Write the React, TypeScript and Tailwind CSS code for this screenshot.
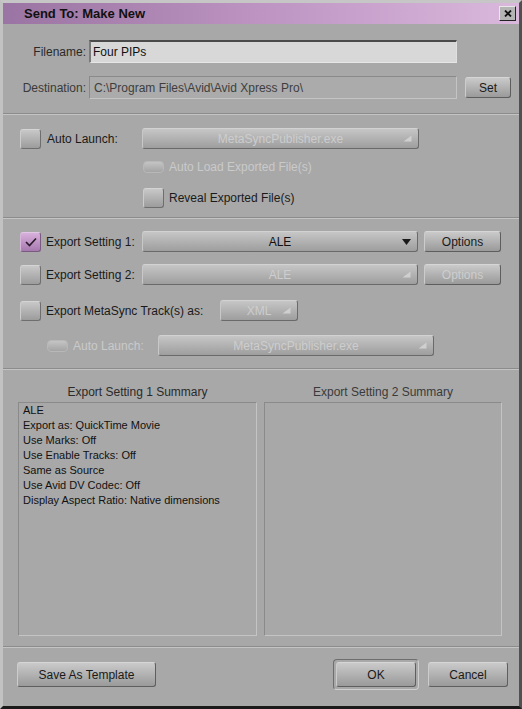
import React from 'react';

const font = { fontFamily: '"Liberation Sans", Arial, sans-serif' };

const Check: React.FC<{ checked?: boolean; disabled?: boolean }> = ({ checked, disabled }) => {
    if (disabled) {
        return (
            <div className="w-[21px] h-[12px] rounded-[4px] border border-[#b8b8b8] bg-gradient-to-b from-[#c4c4c4] to-[#a4a4a4] shrink-0" />
        );
    }
    if (checked) {
        return (
            <div className="w-[21px] h-[20px] rounded-[3px] border border-[#7a5a80] border-t-[#e2c6e6] border-l-[#d6b6da] bg-gradient-to-b from-[#d8b0dc] to-[#a67aae] flex items-center justify-center shrink-0">
                <svg width="12" height="10" viewBox="0 0 12 10">
                    <path d="M1 5 L4.5 8.5 L11 1.5" stroke="#2a1a2c" strokeWidth="1.6" fill="none" />
                </svg>
            </div>
        );
    }
    return (
        <div className="w-[21px] h-[20px] rounded-[3px] border border-[#6e6e6e] border-t-[#d4d4d4] border-l-[#cccccc] bg-gradient-to-b from-[#c8c8c8] to-[#9c9c9c] shrink-0" />
    );
};

const Arrow: React.FC<{ disabled?: boolean }> = ({ disabled }) =>
    disabled ? (
        <svg width="9" height="7" viewBox="0 0 9 7" className="shrink-0">
            <path d="M0.5 6.5 L8.5 6.5 L8.5 0.5 Z" fill="#cfcfcf" />
        </svg>
    ) : (
        <svg width="9" height="6" viewBox="0 0 9 6" className="shrink-0">
            <path d="M0 0 L9 0 L4.5 6 Z" fill="#1a1a1a" />
        </svg>
    );

const Dropdown: React.FC<{ label: string; width: string; disabled?: boolean }> = ({ label, width, disabled }) => (
    <div
        className={`${width} h-[21px] rounded-[3px] border border-[#6a6a6a] border-t-[#d2d2d2] border-l-[#c8c8c8] bg-gradient-to-b from-[#c6c6c6] to-[#9e9e9e] flex items-center pl-[15px] pr-[6px] shrink-0`}
    >
        <span className={`flex-1 text-center text-[12px] ${disabled ? 'text-[#cdcdcd]' : 'text-[#111]'}`}>{label}</span>
        <Arrow disabled={disabled} />
    </div>
);

const Button: React.FC<{ label: string; width: string; height?: string; disabled?: boolean }> = ({ label, width, height = 'h-[21px]', disabled }) => (
    <div
        className={`${width} ${height} rounded-[3px] border border-[#5e5e5e] border-t-[#d6d6d6] border-l-[#cccccc] bg-gradient-to-b from-[#cacaca] to-[#9a9a9a] flex items-center justify-center text-[12px] shrink-0 ${disabled ? 'text-[#cdcdcd]' : 'text-[#1a1a1a]'}`}
    >
        {label}
    </div>
);

const Divider: React.FC = () => (
    <div className="h-[2px] border-t border-[#8c8c8c] border-b border-b-[#c4c4c4]" />
);

const summary1 = [
    'ALE',
    'Export as: QuickTime Movie',
    'Use Marks: Off',
    'Use Enable Tracks: Off',
    'Same as Source',
    'Use Avid DV Codec: Off',
    'Display Aspect Ratio: Native dimensions',
];

export default function App() {
    return (
        <div style={font} className="w-[522px] h-[709px] bg-[#a8a8a8] flex flex-col border-t-[3px] border-t-[#c6c6c6] border-l-[3px] border-l-[#c2c2c2] border-r-[3px] border-r-[#505050] border-b-[3px] border-b-[#1a1a1a] overflow-hidden">
            {/* title bar */}
            <div className="h-[21px] bg-gradient-to-r from-[#9a74a2] via-[#bd94c2] to-[#dab8dc] flex items-center pl-[21px] pr-[3px] shrink-0">
                <span className="flex-1 text-[13px] font-bold text-[#111]">Send To: Make New</span>
                <div className="w-[17px] h-[15px] bg-[#b4b4b4] border border-[#e8e8e8] border-r-[#222] border-b-[#222] flex items-center justify-center">
                    <svg width="8" height="7" viewBox="0 0 8 7">
                        <path d="M1 0.5 L7 6.5 M7 0.5 L1 6.5" stroke="#111" strokeWidth="1.8" />
                    </svg>
                </div>
            </div>

            {/* filename / destination */}
            <div className="flex flex-col pt-[16px] pb-[14px] gap-[13px]">
                <div className="flex items-center h-[23px]">
                    <span className="w-[86px] text-right text-[12px] text-[#2a2a2a] pr-[3px]">Filename:</span>
                    <div className="w-[368px] h-[23px] bg-[#d8d8d8] border-t-2 border-t-[#4a4a4a] border-l-2 border-l-[#7a7a7a] border-b border-b-[#e6e6e6] border-r border-r-[#e0e0e0] flex items-center pl-[2px] text-[12px] text-[#111]">
                        Four PIPs
                    </div>
                </div>
                <div className="flex items-center h-[23px]">
                    <span className="w-[86px] text-right text-[12px] text-[#3a3a3a] pr-[3px]">Destination:</span>
                    <div className="w-[368px] h-[23px] bg-[#ababab] border border-[#8a8a8a] border-b-[#c4c4c4] border-r-[#c4c4c4] flex items-center pl-[4px] text-[12px] text-[#3e3e3e]">
                        C:\Program Files\Avid\Avid Xpress Pro\
                    </div>
                    <div className="ml-[8px]">
                        <Button label="Set" width="w-[46px]" />
                    </div>
                </div>
            </div>

            <Divider />

            {/* auto launch */}
            <div className="flex flex-col pt-[13px] pb-[9px]">
                <div className="flex items-center h-[21px] pl-[17px]">
                    <Check />
                    <span className="w-[101px] pl-[6px] text-[12px] text-[#1a1a1a]">Auto Launch:</span>
                    <Dropdown label="MetaSyncPublisher.exe" width="w-[277px]" disabled />
                </div>
                <div className="flex items-center h-[21px] pl-[140px] mt-[7px]">
                    <Check disabled />
                    <span className="pl-[5px] text-[12px] text-[#cacaca]">Auto Load Exported File(s)</span>
                </div>
                <div className="flex items-center h-[21px] pl-[140px] mt-[10px]">
                    <Check />
                    <span className="pl-[5px] text-[12px] text-[#1a1a1a]">Reveal Exported File(s)</span>
                </div>
            </div>

            <Divider />

            {/* export settings */}
            <div className="flex flex-col pt-[12px] pb-[12px]">
                <div className="flex items-center h-[21px] pl-[17px]">
                    <Check checked />
                    <span className="w-[101px] pl-[5px] text-[12px] text-[#1a1a1a]">Export Setting 1:</span>
                    <Dropdown label="ALE" width="w-[276px]" />
                    <div className="ml-[6px]">
                        <Button label="Options" width="w-[77px]" />
                    </div>
                </div>
                <div className="flex items-center h-[21px] pl-[17px] mt-[12px]">
                    <Check />
                    <span className="w-[101px] pl-[5px] text-[12px] text-[#1a1a1a]">Export Setting 2:</span>
                    <Dropdown label="ALE" width="w-[276px]" disabled />
                    <div className="ml-[6px]">
                        <Button label="Options" width="w-[77px]" disabled />
                    </div>
                </div>
                <div className="flex items-center h-[21px] pl-[17px] mt-[15px]">
                    <Check />
                    <span className="w-[179px] pl-[5px] text-[12px] text-[#1a1a1a]">Export MetaSync Track(s) as:</span>
                    <Dropdown label="XML" width="w-[78px]" disabled />
                </div>
                <div className="flex items-center h-[21px] pl-[44px] mt-[14px]">
                    <Check disabled />
                    <span className="w-[90px] pl-[5px] text-[12px] text-[#cacaca]">Auto Launch:</span>
                    <Dropdown label="MetaSyncPublisher.exe" width="w-[276px]" disabled />
                </div>
            </div>

            <Divider />

            {/* summaries */}
            <div className="flex gap-[7px] pl-[15px] pt-[13px] pb-[10px]">
                <div className="flex flex-col w-[239px]">
                    <div className="h-[19px] text-center text-[12px] text-[#2a2a2a]">Export Setting 1 Summary</div>
                    <div className="h-[234px] border border-[#8a8a8a] border-r-[#c4c4c4] border-b-[#c4c4c4] px-[4px] pt-[0px] flex flex-col text-[11px] leading-[15px] text-[#111]">
                        {summary1.map((line) => (
                            <span key={line}>{line}</span>
                        ))}
                    </div>
                </div>
                <div className="flex flex-col w-[238px]">
                    <div className="h-[19px] text-center text-[12px] text-[#3a3a3a]">Export Setting 2 Summary</div>
                    <div className="h-[234px] border border-[#8a8a8a] border-r-[#c4c4c4] border-b-[#c4c4c4]" />
                </div>
            </div>

            <Divider />

            {/* buttons */}
            <div className="flex items-center pl-[14px] pt-[11px]">
                <Button label="Save As Template" width="w-[139px]" height="h-[25px]" />
                <div className="ml-[177px] p-[2px] rounded-[4px] border border-[#6e6e6e] border-b-[#cfcfcf] border-r-[#cfcfcf]">
                    <Button label="OK" width="w-[80px]" height="h-[25px]" />
                </div>
                <div className="ml-[9px]">
                    <Button label="Cancel" width="w-[80px]" height="h-[25px]" />
                </div>
            </div>
        </div>
    );
}
